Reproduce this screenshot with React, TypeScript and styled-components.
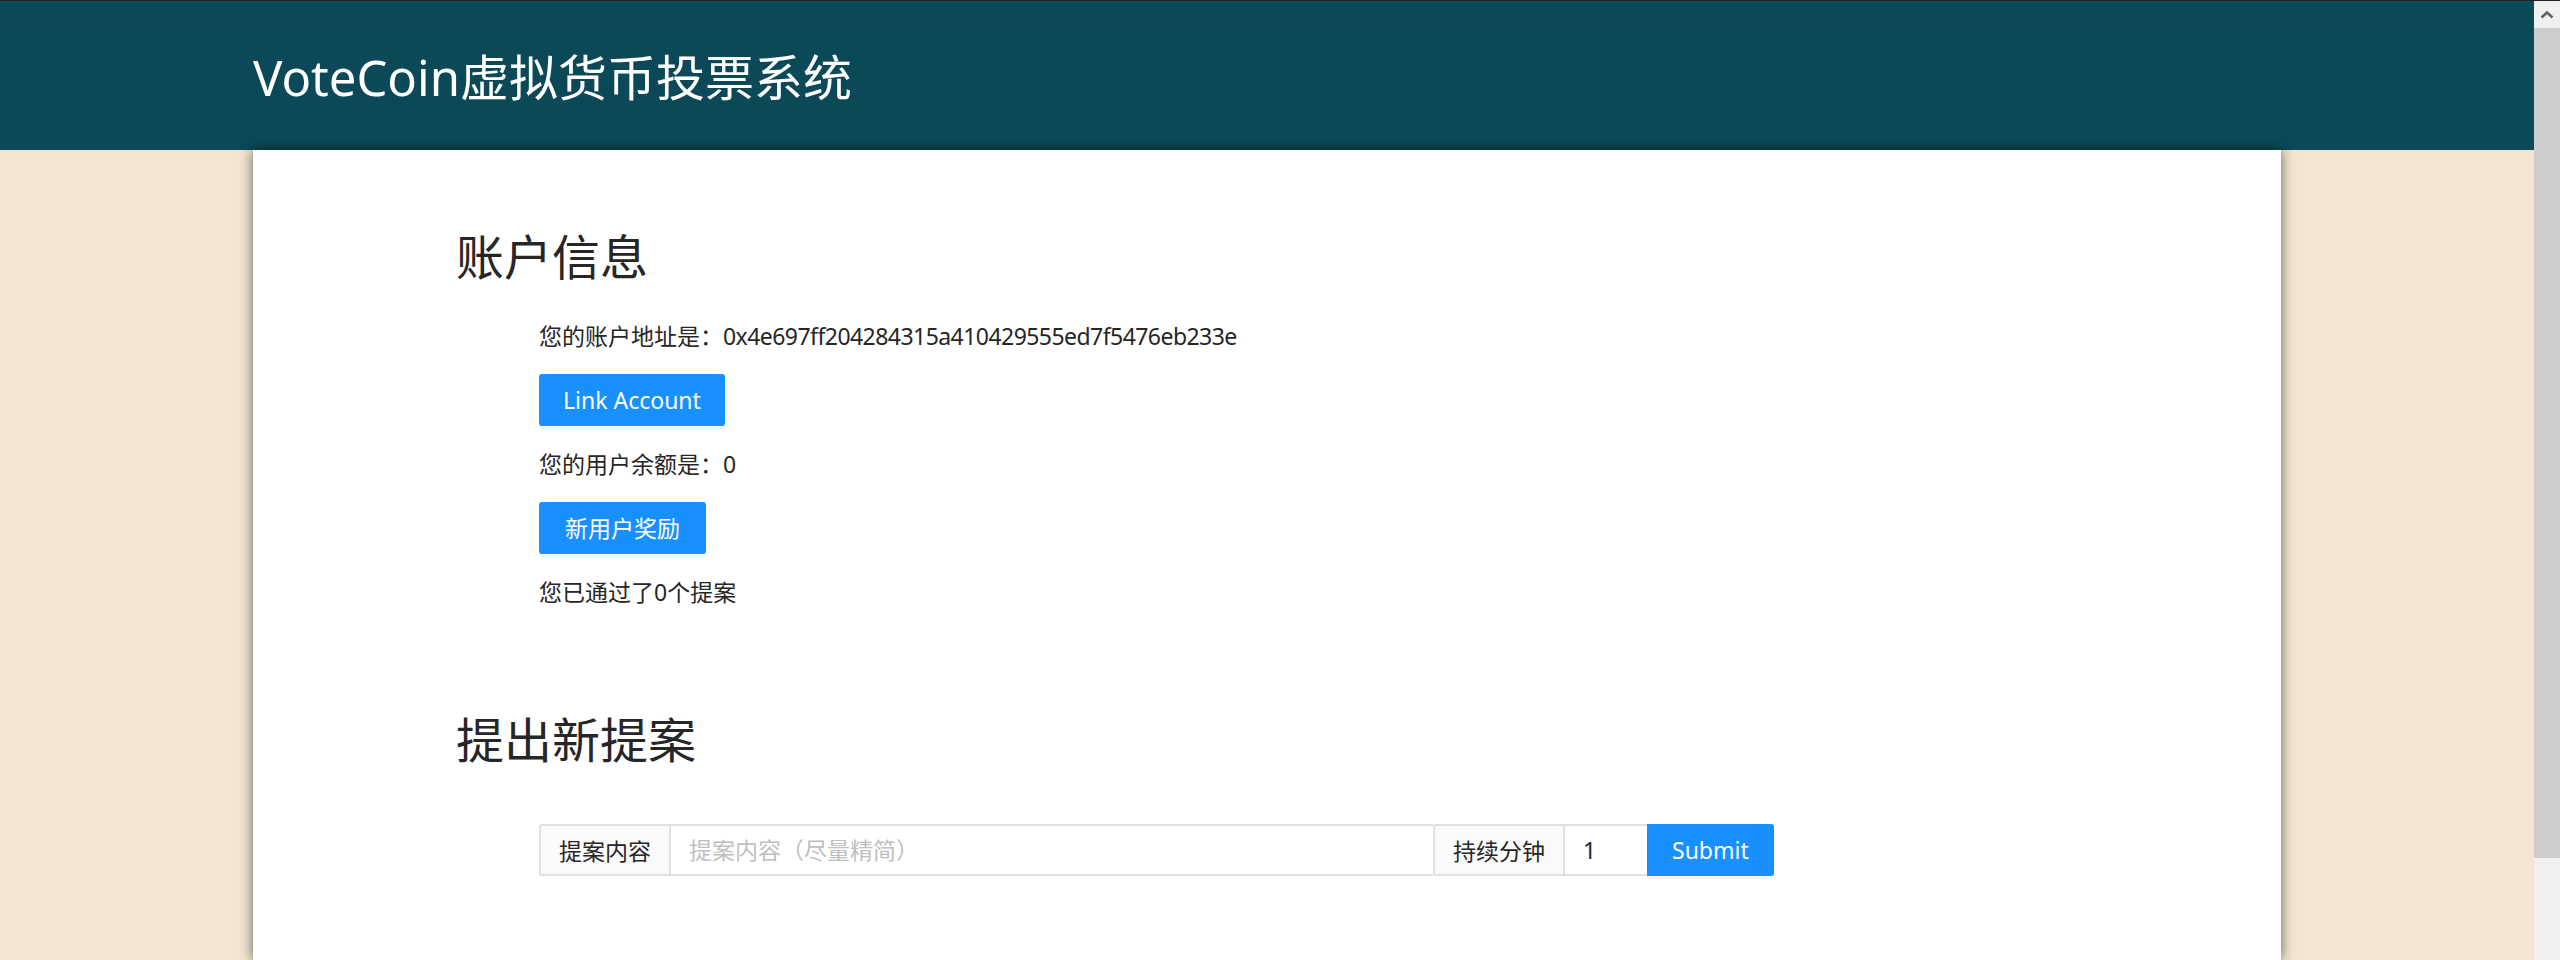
import React from "react";
import styled, { createGlobalStyle } from "styled-components";

const GlobalStyle = createGlobalStyle`
  html, body { margin: 0; padding: 0; }
  body {
    background: #f4e5d2;
    font-family: "Noto Sans", "Noto Sans CJK SC", sans-serif;
    color: #262626;
    overflow: hidden;
  }
  * { box-sizing: border-box; }
`;

const Page = styled.div`
  display: flex;
  height: 100vh;
  border-top: 1px solid #2a2020;
`;

const Main = styled.div`
  flex: 1;
  display: flex;
  flex-direction: column;
  min-width: 0;
`;

const Header = styled.header`
  height: 149px;
  flex: none;
  background: #0b4958;
  display: flex;
  align-items: center;
  padding: 4px 0 0 253px;
`;

const Title = styled.h1`
  margin: 0;
  font-size: 49px;
  font-weight: 400;
  color: #ffffff;
  line-height: 1.2;
  white-space: nowrap;
`;

const Panel = styled.main`
  position: relative;
  z-index: 1;
  flex: 1;
  width: 2028px;
  margin-left: 253px;
  background: #ffffff;
  box-shadow: 0 0 12px rgba(0, 0, 0, 0.6);
  padding: 78px 0 0 203px;
`;

const Section = styled.section<{ $gap: number }>`
  & + & { margin-top: ${(p) => p.$gap}px; }
`;

const Heading = styled.h2`
  margin: 0;
  font-size: 48px;
  font-weight: 400;
  line-height: 58px;
  color: #262626;
`;

const Body = styled.div<{ $top: number }>`
  margin-top: ${(p) => p.$top}px;
  padding-left: 83px;
  display: flex;
  flex-direction: column;
  align-items: flex-start;
  gap: 20px;
`;

const Line = styled.div`
  font-size: 23px;
  line-height: 36px;
  white-space: nowrap;
`;

const Hex = styled.span`
  letter-spacing: -0.55px;
`;

const Button = styled.button<{ $side?: "right"; $pad?: number }>`
  height: 52px;
  padding: 0 ${(p) => p.$pad ?? 26}px;
  border: none;
  border-radius: ${(p) => (p.$side === "right" ? "0 3px 3px 0" : "3px")};
  background: #1890ff;
  color: #ffffff;
  font-family: inherit;
  font-size: 23px;
  line-height: 52px;
  box-shadow: 0 3px 0 rgba(0, 0, 0, 0.045);
  cursor: pointer;
`;

const FormRow = styled.div`
  display: flex;
  align-items: flex-start;
`;

const Group = styled.div`
  display: flex;
  height: 52px;
`;

const Addon = styled.span`
  display: flex;
  align-items: center;
  padding: 0 18px;
  background: #fafafa;
  border: 2px solid #e0e0e0;
  border-right: none;
  border-radius: 3px 0 0 3px;
  font-size: 23px;
  white-space: nowrap;
`;

const Input = styled.input<{ $w: number }>`
  width: ${(p) => p.$w}px;
  height: 52px;
  border: 2px solid #e0e0e0;
  border-right: none;
  border-radius: 0;
  padding: 0 18px;
  font-family: inherit;
  font-size: 23px;
  color: #262626;
  outline: none;
  background: #fff;
  &::placeholder { color: #bfbfbf; }
`;

const Scrollbar = styled.div`
  width: 26px;
  flex: none;
  display: flex;
  flex-direction: column;
  background: #f0f0f0;
`;

const ArrowCell = styled.div`
  height: 27px;
  display: flex;
  align-items: center;
  justify-content: center;
`;

const Thumb = styled.div`
  height: 830px;
  background: #cdcdcd;
`;

export default function App() {
  return (
    <>
      <GlobalStyle />
      <Page>
        <Main>
          <Header>
            <Title>VoteCoin虚拟货币投票系统</Title>
          </Header>
          <Panel>
            <Section $gap={0}>
              <Heading>账户信息</Heading>
              <Body $top={32}>
                <Line>
                  您的账户地址是：<Hex>0x4e697ff204284315a410429555ed7f5476eb233e</Hex>
                </Line>
                <Button $pad={24}>Link Account</Button>
                <Line>您的用户余额是：0</Line>
                <Button>新用户奖励</Button>
                <Line>您已通过了0个提案</Line>
              </Body>
            </Section>
            <Section $gap={101}>
              <Heading>提出新提案</Heading>
              <Body $top={55}>
                <FormRow>
                  <Group>
                    <Addon>提案内容</Addon>
                    <Input $w={764} placeholder="提案内容（尽量精简）" />
                  </Group>
                  <Group>
                    <Addon>持续分钟</Addon>
                    <Input $w={84} defaultValue="1" />
                  </Group>
                  <Button $side="right" $pad={25}>Submit</Button>
                </FormRow>
              </Body>
            </Section>
          </Panel>
        </Main>
        <Scrollbar>
          <ArrowCell>
            <svg width="14" height="9" viewBox="0 0 14 9">
              <path d="M1.5 7.5 L7 2.5 L12.5 7.5" fill="none" stroke="#606060" strokeWidth="2.6" />
            </svg>
          </ArrowCell>
          <Thumb />
        </Scrollbar>
      </Page>
    </>
  );
}
